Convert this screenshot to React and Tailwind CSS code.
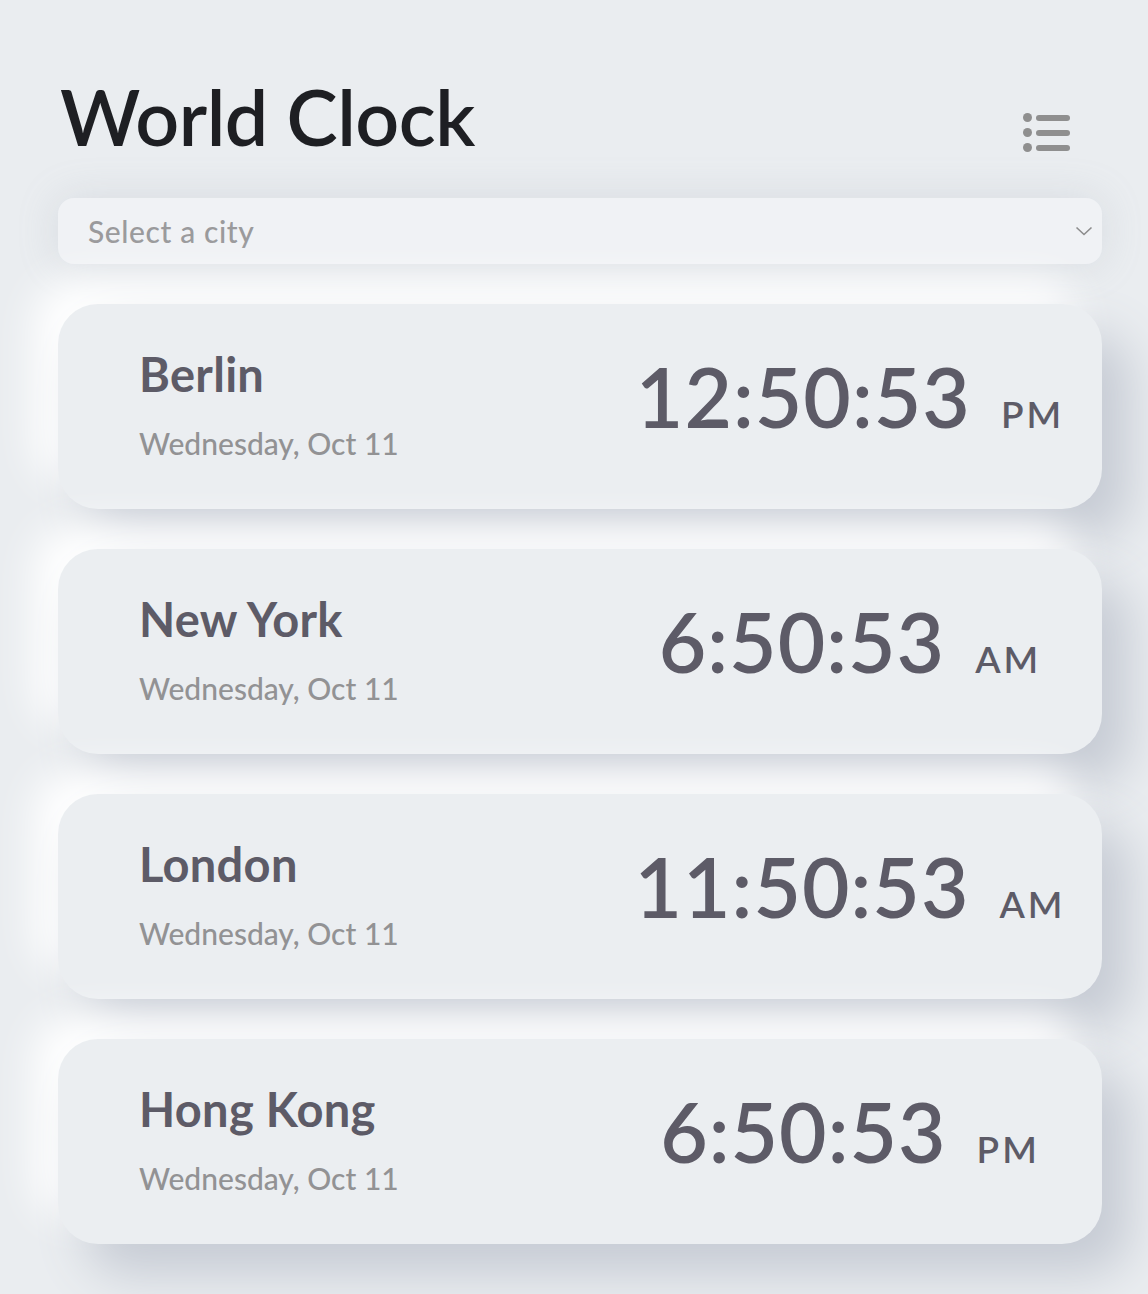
import React from "react";

const cities = [
  { name: "Berlin", date: "Wednesday, Oct 11", time: "12:50:53", ampm: "PM" },
  { name: "New York", date: "Wednesday, Oct 11", time: "6:50:53", ampm: "AM" },
  { name: "London", date: "Wednesday, Oct 11", time: "11:50:53", ampm: "AM" },
  { name: "Hong Kong", date: "Wednesday, Oct 11", time: "6:50:53", ampm: "PM" },
];

function MenuIcon() {
  return (
    <svg width="48" height="40" viewBox="0 0 48 40" fill="#8f8f8f">
      <circle cx="4.5" cy="4.5" r="4.5" />
      <circle cx="4.5" cy="19.5" r="4.5" />
      <circle cx="4.5" cy="34.5" r="4.5" />
      <rect x="13" y="2" width="34" height="6" rx="3" />
      <rect x="13" y="17" width="34" height="6" rx="3" />
      <rect x="13" y="32" width="34" height="6" rx="3" />
    </svg>
  );
}

export default function App() {
  return (
    <div
      className="min-h-[1294px] w-full bg-[#eaedf0] overflow-hidden"
      style={{ fontFamily: "Lato, 'Open Sans', sans-serif" }}
    >
      <div className="pl-[58px] pr-[46px] pt-[76px]">
        <div className="flex items-start justify-between">
          <h1 className="text-[77px] leading-[80px] font-semibold text-[#1e1f23] tracking-[-0.5px] ml-[2px]">
            World Clock
          </h1>
          <div className="mt-[37px] mr-[31px]">
            <MenuIcon />
          </div>
        </div>
        <div className="mt-[42px] h-[66px] rounded-[16px] bg-[#f0f2f5] flex items-center justify-between pl-[30px] pr-[8px] shadow-[0_0_40px_rgba(150,160,175,0.22)]">
          <span className="text-[30px] text-[#9a9a9c] font-medium tracking-[0.6px]">Select a city</span>
          <svg width="18" height="12" viewBox="0 0 18 12" fill="none" stroke="#8c8c8c" strokeWidth="1.6" className="mr-[1px]">
            <path d="M1.5 2.5 L9 9.5 L16.5 2.5" />
          </svg>
        </div>
        <div className="mt-[40px] flex flex-col gap-[40px]">
          {cities.map((c) => (
            <div
              key={c.name}
              className="h-[205px] rounded-[40px] bg-[#ebeef1] flex items-start shadow-[28px_30px_50px_#c6cbd4,-24px_-24px_40px_#ffffff]"
            >
              <div className="pl-[81px] pt-[40px] w-[540px]">
                <div className="text-[47px] leading-[60px] font-bold text-[#5d5b67] tracking-[0.3px]">{c.name}</div>
                <div className="mt-[19px] text-[30px] leading-[40px] font-medium text-[#929294] tracking-[0px]">{c.date}</div>
              </div>
              <div className="flex-1 flex justify-center pt-[44px]">
                <div className="flex items-baseline">
                  <span className="text-[82px] leading-[96px] font-semibold text-[#5d5b67] tracking-[1px]">{c.time}</span>
                  <span className="ml-[30px] text-[37px] font-semibold text-[#5d5b67] tracking-[3px]">{c.ampm}</span>
                </div>
              </div>
            </div>
          ))}
        </div>
      </div>
    </div>
  );
}
